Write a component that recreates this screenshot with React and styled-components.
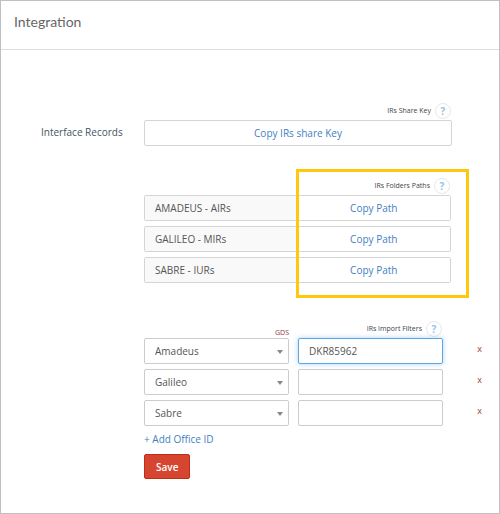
import { useState } from 'react';
import styled, { createGlobalStyle } from 'styled-components';

const gdsOptions = ['Amadeus', 'Galileo', 'Sabre'];
const folders = ['AMADEUS - AIRs', 'GALILEO - MIRs', 'SABRE - IURs'];

export default function App() {
    const [filters, setFilters] = useState([
        { gds: 'Amadeus', office: 'DKR85962' },
        { gds: 'Galileo', office: '' },
        { gds: 'Sabre', office: '' },
    ]);

    const update = (index, values) => {
        setFilters(filters.map((item, i) => (i === index ? { ...item, ...values } : item)));
    };

    return (
        <>
            <GlobalStyle />
            <Page>
                <Header>
                    <Title>Integration</Title>
                </Header>
                <Content>
                    <SideLabel>Interface Records</SideLabel>
                    <Fields>
                        <KeySection>
                            <Caption>
                                IRs Share Key
                                <Help type="button" aria-label="Help: IRs Share Key">?</Help>
                            </Caption>
                            <CopyButton type="button">Copy IRs share Key</CopyButton>
                        </KeySection>

                        <PathSection>
                            <Caption>
                                IRs Folders Paths
                                <Help type="button" aria-label="Help: IRs Folders Paths">?</Help>
                            </Caption>
                            <Rows>
                                {folders.map((name) => (
                                    <Folder key={name}>
                                        <FolderName>{name}</FolderName>
                                        <PathButton type="button">Copy Path</PathButton>
                                    </Folder>
                                ))}
                            </Rows>
                            <Highlight />
                        </PathSection>

                        <form onSubmit={(e) => e.preventDefault()}>
                            <FilterRow $head>
                                <GdsCaption id="gds">GDS</GdsCaption>
                                <Caption>
                                    <span id="filters">IRs Import Filters</span>
                                    <Help type="button" aria-label="Help: IRs Import Filters">?</Help>
                                </Caption>
                            </FilterRow>
                            <Rows>
                                {filters.map((item, index) => (
                                    <FilterRow key={index}>
                                        <SelectBox>
                                            <Select
                                                aria-labelledby="gds"
                                                value={item.gds}
                                                onChange={(e) => update(index, { gds: e.target.value })}
                                            >
                                                {gdsOptions.map((option) => <option key={option}>{option}</option>)}
                                            </Select>
                                            <Arrow viewBox="0 0 6 4" aria-hidden="true">
                                                <path d="M0 0h6L3 4z" fill="#888" />
                                            </Arrow>
                                        </SelectBox>
                                        <Input
                                            aria-labelledby="filters"
                                            $active={index === 0}
                                            value={item.office}
                                            onChange={(e) => update(index, { office: e.target.value })}
                                        />
                                        <Remove
                                            type="button"
                                            aria-label={`Remove ${item.gds}`}
                                            onClick={() => setFilters(filters.filter((_, i) => i !== index))}
                                        >
                                            x
                                        </Remove>
                                    </FilterRow>
                                ))}
                            </Rows>
                            <Actions>
                                <AddLink
                                    href="#add"
                                    onClick={(e) => {
                                        e.preventDefault();
                                        setFilters([...filters, { gds: 'Amadeus', office: '' }]);
                                    }}
                                >
                                    + Add Office ID
                                </AddLink>
                                <Save type="submit">Save</Save>
                            </Actions>
                        </form>
                    </Fields>
                </Content>
            </Page>
        </>
    );
}

const GlobalStyle = createGlobalStyle`
    * {
        box-sizing: border-box;
    }

    body {
        margin: 0;
        background: #fff;
        color: #555;
        font: 10px/16px "Open Sans", "Noto Sans", sans-serif;
    }

    button, input, select {
        margin: 0;
        font: inherit;
        color: inherit;
    }

    button {
        cursor: pointer;
    }
`;

const Page = styled.div`
    min-height: 100vh;
    border: 1px solid #c0c0c0;
`;

const Header = styled.header`
    padding: 11px 13px 17px;
    border-bottom: 1px solid #ddd;
`;

const Title = styled.h1`
    margin: 0;
    font: 14px/20px Lato, sans-serif;
    color: #666;
`;

const Content = styled.main`
    display: grid;
    grid-template-columns: 103px 1fr;
    padding: 51px 16px 32px 40px;
`;

const SideLabel = styled.div`
    padding-top: 23px;
    color: #3f5665;
`;

const Fields = styled.div`
    display: flex;
    flex-direction: column;
`;

const KeySection = styled.section`
    padding-right: 31px;
    margin-bottom: 30px;
`;

const PathSection = styled.section`
    position: relative;
    margin: 0 32px 36px 0;
`;

const Caption = styled.div`
    display: flex;
    align-items: center;
    justify-content: flex-end;
    gap: 4px;
    height: 19px;
    padding-right: 1px;
    font-size: 7px;
    color: #444;
`;

const GdsCaption = styled.div`
    font-size: 7px;
    line-height: 10px;
    text-align: right;
    color: #8a3a4a;
`;

const Help = styled.button`
    width: 16px;
    height: 16px;
    padding: 0;
    border: 1px solid #e6e8ec;
    border-radius: 50%;
    background: #fff;
    color: #9dbfe6;
    font-size: 10px;
    font-weight: 700;
    line-height: 14px;
    text-align: center;
`;

const CopyButton = styled.button`
    display: block;
    width: 100%;
    height: 26px;
    padding: 0;
    border: 1px solid #d5d5d5;
    border-radius: 2px;
    background: #fff;
    color: #3f7fc3;
`;

const Rows = styled.div`
    display: grid;
    gap: 5px;
`;

const Folder = styled.div`
    display: grid;
    grid-template-columns: 1fr 1fr;
    height: 26px;
    border: 1px solid #d5d5d5;
    border-radius: 2px;
`;

const FolderName = styled.div`
    padding-left: 10px;
    line-height: 24px;
    background: #f9f9f9;
`;

const PathButton = styled.button`
    padding: 0;
    border: 0;
    background: #fff;
    color: #3f7fc3;
`;

/* frame drawn over the copy buttons */
const Highlight = styled.div`
    position: absolute;
    top: -7px;
    right: -18px;
    bottom: -15px;
    left: calc(50% - 2px);
    border: 3px solid #ffc80f;
    pointer-events: none;
`;

const FilterRow = styled.div`
    display: grid;
    grid-template-columns: 1fr 1fr 31px;
    align-items: ${(props) => (props.$head ? 'end' : 'center')};
    gap: 9px;
`;

const SelectBox = styled.div`
    position: relative;
`;

const Select = styled.select`
    display: block;
    width: 100%;
    height: 26px;
    padding: 0 20px 0 10px;
    border: 1px solid #ccc;
    border-radius: 2px;
    background: #fff;
    appearance: none;
`;

const Arrow = styled.svg`
    position: absolute;
    top: 12px;
    right: 6px;
    width: 6px;
    height: 4px;
    pointer-events: none;
`;

const Input = styled.input`
    width: 100%;
    min-width: 0;
    height: 26px;
    padding: 0 10px;
    border: 1px solid ${(props) => (props.$active ? '#5aa7e6' : '#ccc')};
    border-radius: 2px;
    box-shadow: ${(props) => (props.$active ? '0 0 5px rgba(90, 167, 230, 0.5)' : 'none')};
    outline: none;
`;

const Remove = styled.button`
    height: 20px;
    padding: 0 1px 4px;
    border: 0;
    background: none;
    color: #a3363b;
    font-size: 9px;
    line-height: 16px;
    text-align: right;
`;

const Actions = styled.div`
    display: flex;
    flex-direction: column;
    align-items: flex-start;
    gap: 7px;
    padding-top: 5px;
`;

const AddLink = styled.a`
    color: #3f7fc3;
    text-decoration: none;
`;

const Save = styled.button`
    height: 25px;
    padding: 0 11px;
    border: 1px solid #c22d17;
    border-radius: 2px;
    background: #d6452f;
    color: #fff;
    font-weight: 600;
`;
